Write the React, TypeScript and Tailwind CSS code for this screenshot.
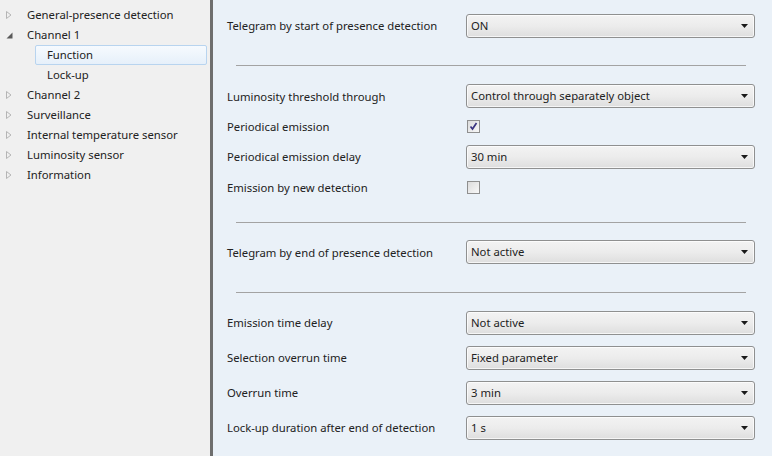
import React from "react";

const font = { fontFamily: '"Noto Sans", "Open Sans", sans-serif' };

function Collapsed() {
  return (
    <svg width="6" height="8" viewBox="0 0 6 8" className="shrink-0">
      <path d="M0.5 0.5 L5 4 L0.5 7.5 Z" fill="none" stroke="#b5b5b5" strokeWidth="1" />
    </svg>
  );
}

function Expanded() {
  return (
    <svg width="7" height="7" viewBox="0 0 7 7" className="shrink-0">
      <path d="M6.5 0.5 L6.5 6.5 L0.5 6.5 Z" fill="#5a5a5a" />
    </svg>
  );
}

function TreeItem({ label, level, state, selected }: { label: string; level: number; state?: "c" | "e"; selected?: boolean }) {
  if (level === 2) {
    return (
      <div className="h-[20px] flex items-center pl-[35px] pr-[3px]">
        <div
          className={
            "h-[20px] flex-1 flex items-center pl-[11px] pt-px rounded-[2px] " +
            (selected ? "border border-[#b8d4ef] bg-gradient-to-b from-[#f6fafe] to-[#e6f0fa]" : "border border-transparent")
          }
        >
          {label}
        </div>
      </div>
    );
  }
  return (
    <div className="h-[20px] flex items-center">
      <div className="w-[27px] flex items-center pl-[6px]">{state === "e" ? <Expanded /> : <Collapsed />}</div>
      <span className="pt-px">{label}</span>
    </div>
  );
}

function Select({ value }: { value: string }) {
  return (
    <div className="w-[289px] h-[24px] rounded-[3px] border border-[#8f9090] bg-gradient-to-b from-[#f3f3f3] via-[#ececec] to-[#dedede] flex items-center justify-between pl-[4px] pr-[6px] shadow-[inset_0_0_0_1px_rgba(255,255,255,0.7)]">
      <span className="pt-px">{value}</span>
      <svg width="7" height="4" viewBox="0 0 7 4">
        <path d="M0 0 L7 0 L3.5 4 Z" fill="#1a1a1a" />
      </svg>
    </div>
  );
}

function Check({ checked }: { checked?: boolean }) {
  return (
    <div className="ml-[1px] w-[13px] h-[13px] border border-[#8f8f8f] bg-gradient-to-br from-[#dcdcdc] to-[#f8f8f8] flex items-center justify-center">
      {checked && (
        <svg width="9" height="9" viewBox="0 0 9 9">
          <path d="M1.5 4.5 L3.5 7 L7.5 1" fill="none" stroke="#3a3480" strokeWidth="1.7" />
        </svg>
      )}
    </div>
  );
}

function Row({ label, h, children }: { label: string; h: string; children: React.ReactNode }) {
  return (
    <div className={"flex items-center " + h}>
      <div className="w-[239px] shrink-0 pt-[2px]">{label}</div>
      {children}
    </div>
  );
}

function Hr({ mt }: { mt: string }) {
  return <div className={"h-px bg-[#a3a3a3] ml-[9px] mr-[9px] " + mt} />;
}

export default function App() {
  return (
    <div className="w-[772px] h-[456px] flex text-[11.3px] text-[#222] overflow-hidden" style={font}>
      <div className="w-[210px] shrink-0 bg-[#f0f0f0] pt-[5px]">
        <TreeItem label="General-presence detection" level={1} state="c" />
        <TreeItem label="Channel 1" level={1} state="e" />
        <TreeItem label="Function" level={2} selected />
        <TreeItem label="Lock-up" level={2} />
        <TreeItem label="Channel 2" level={1} state="c" />
        <TreeItem label="Surveillance" level={1} state="c" />
        <TreeItem label="Internal temperature sensor" level={1} state="c" />
        <TreeItem label="Luminosity sensor" level={1} state="c" />
        <TreeItem label="Information" level={1} state="c" />
      </div>
      <div className="w-[3px] shrink-0 bg-[#6e6e6e]" />
      <div className="flex-1 bg-[#eaf1f8] pl-[14px] pr-[17px] pt-[13px]">
        <Row label="Telegram by start of presence detection" h="h-[25px]">
          <Select value="ON" />
        </Row>
        <Hr mt="mt-[27px]" />
        <div className="mt-[15px]">
          <Row label="Luminosity threshold through" h="h-[30px]">
            <Select value="Control through separately object" />
          </Row>
          <Row label="Periodical emission" h="h-[30px]">
            <Check checked />
          </Row>
          <Row label="Periodical emission delay" h="h-[31px]">
            <Select value="30 min" />
          </Row>
          <Row label="Emission by new detection" h="h-[30px]">
            <Check />
          </Row>
        </div>
        <Hr mt="mt-[20px]" />
        <div className="mt-[14px]">
          <Row label="Telegram by end of presence detection" h="h-[30px]">
            <Select value="Not active" />
          </Row>
        </div>
        <Hr mt="mt-[25px]" />
        <div className="mt-[12px]">
          <Row label="Emission time delay" h="h-[35px]">
            <Select value="Not active" />
          </Row>
          <Row label="Selection overrun time" h="h-[35px]">
            <Select value="Fixed parameter" />
          </Row>
          <Row label="Overrun time" h="h-[35px]">
            <Select value="3 min" />
          </Row>
          <Row label="Lock-up duration after end of detection" h="h-[35px]">
            <Select value="1 s" />
          </Row>
        </div>
      </div>
    </div>
  );
}
